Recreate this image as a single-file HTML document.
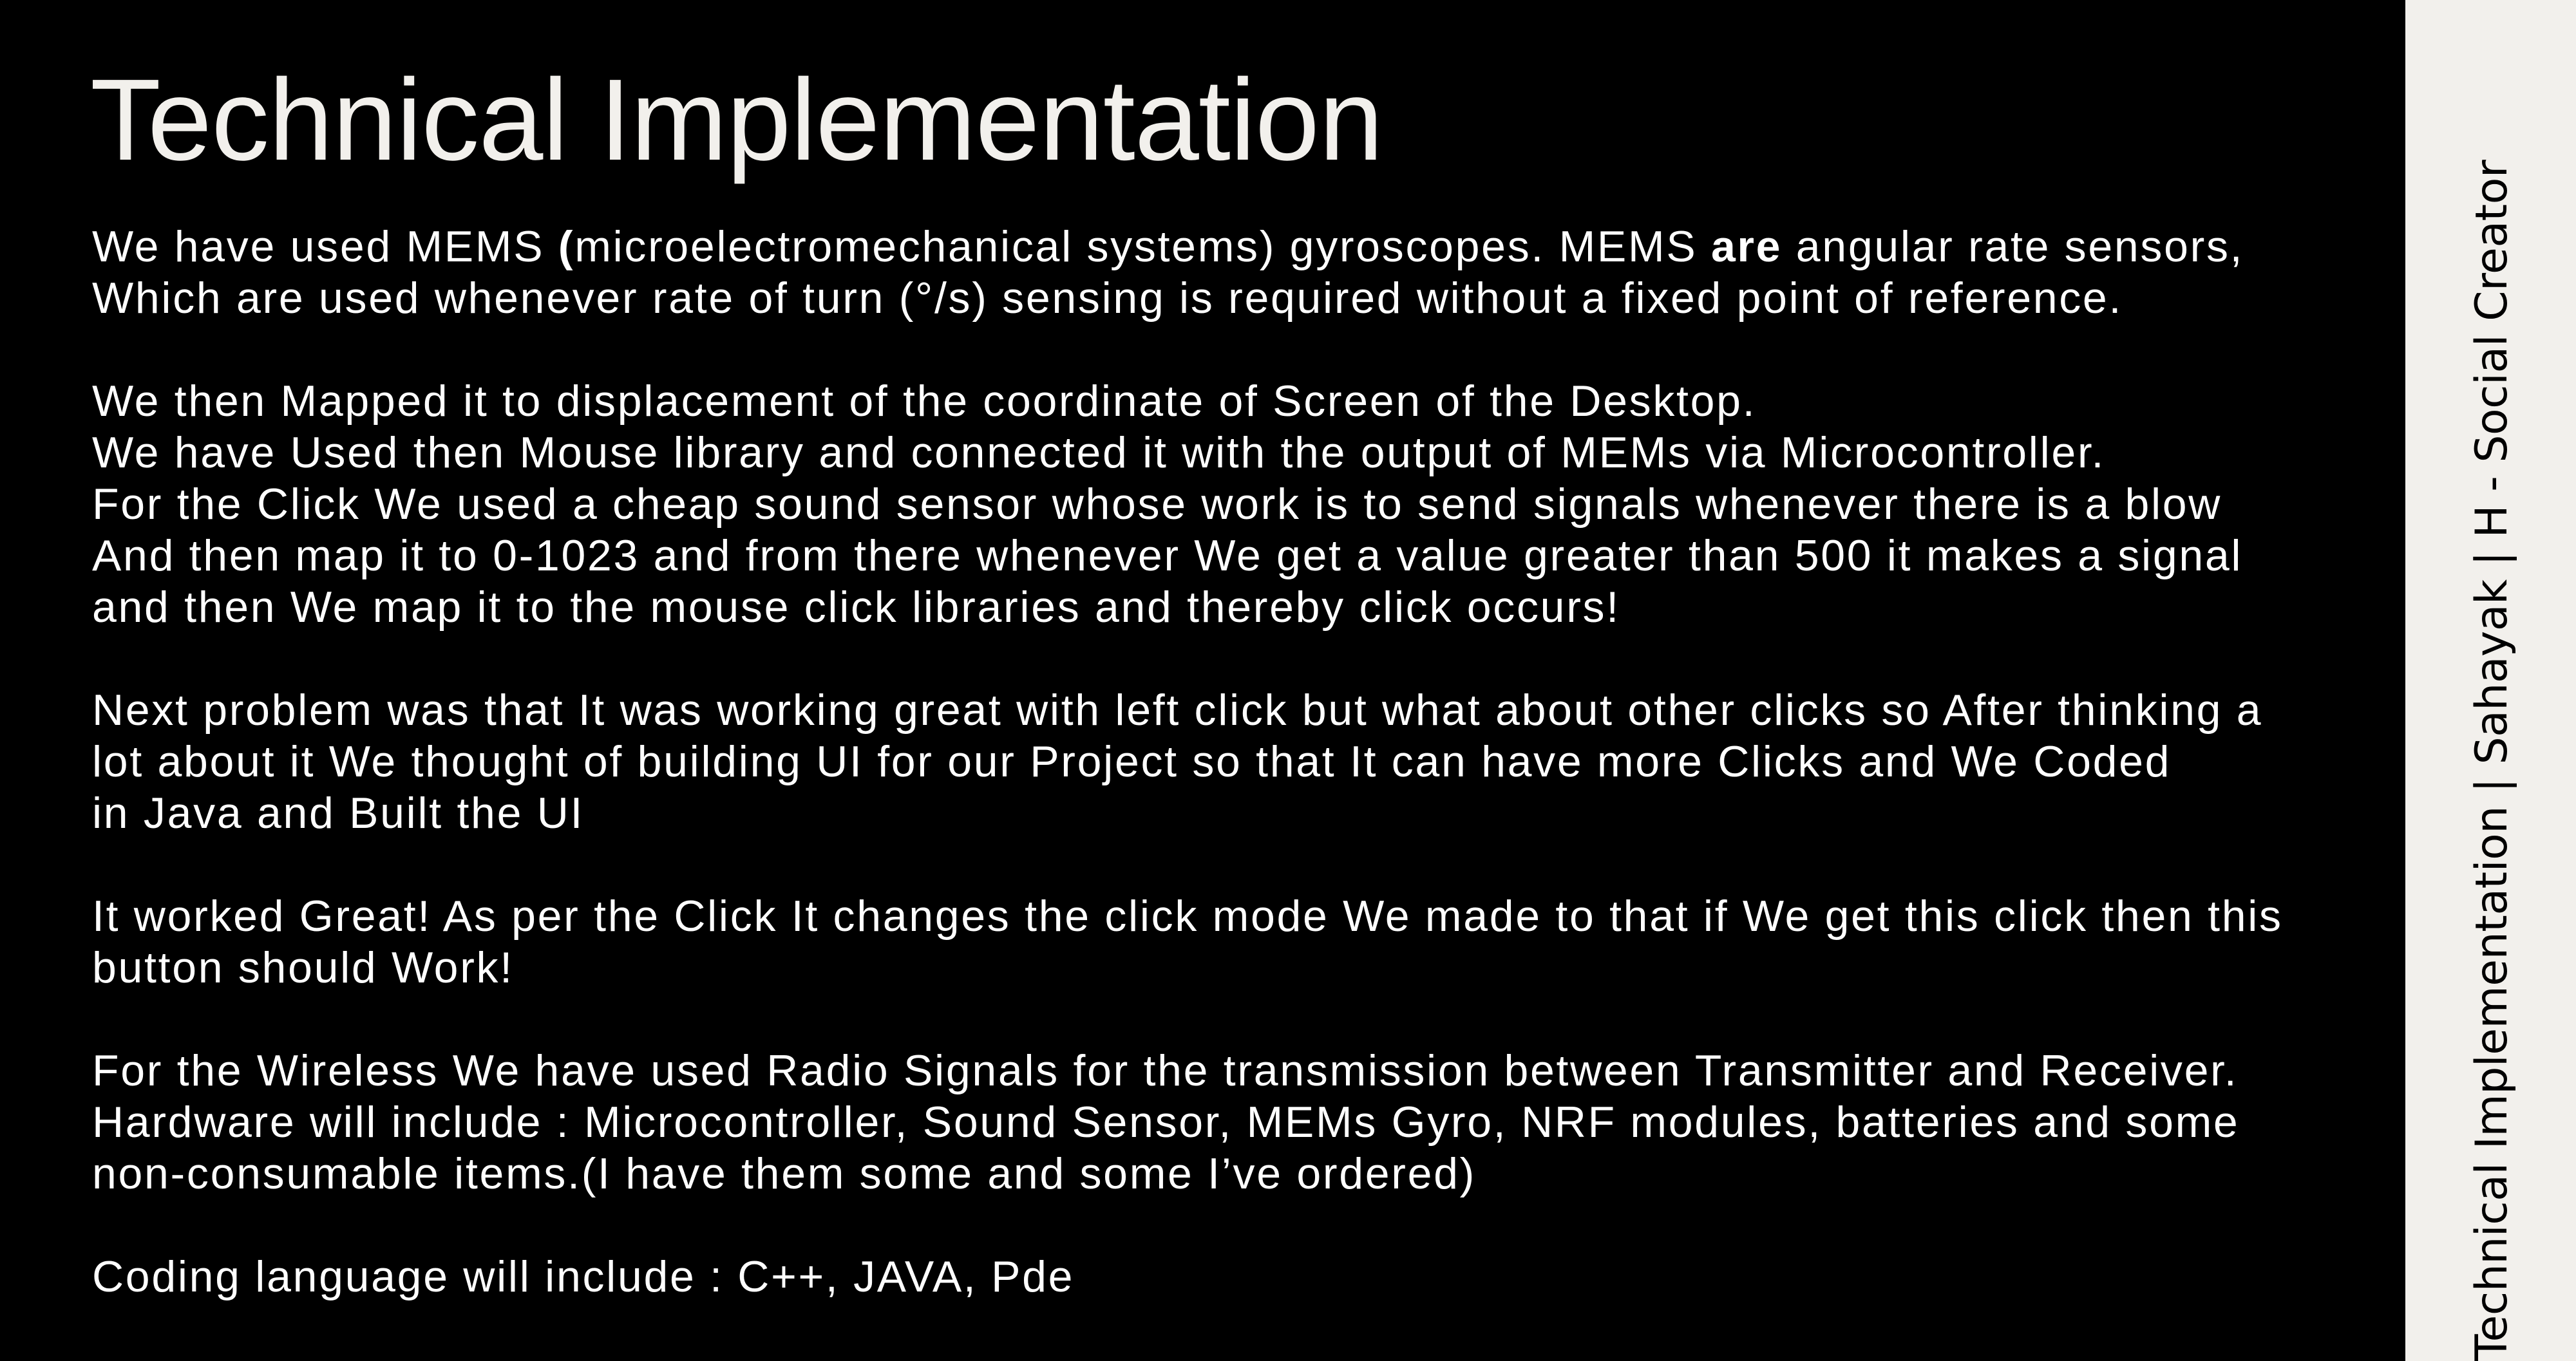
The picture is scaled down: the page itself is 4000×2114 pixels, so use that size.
<!DOCTYPE html>
<html><head><meta charset="utf-8"><style>
html,body{margin:0;padding:0}
body{width:4000px;height:2114px;background:#000;position:relative;overflow:hidden;font-family:"Liberation Sans",sans-serif}
.title{position:absolute;left:140px;top:92px;font-size:180px;line-height:190px;color:#f2f0ec;white-space:nowrap;letter-spacing:-1px}
.body{position:absolute;left:143px;top:343px;font-size:68px;line-height:80px;color:#fff;white-space:nowrap;letter-spacing:2.7px}
.body div{height:80px}
.panel{position:absolute;left:3735px;top:0;width:265px;height:2114px;background:#f2f0ec}
.side{position:absolute;left:3825px;top:255px;height:1859px;width:90px;line-height:90px;writing-mode:vertical-rl;transform:rotate(180deg);font-size:68px;color:#000;white-space:nowrap;text-align:left;font-family:"DejaVu Sans","Liberation Sans",sans-serif;letter-spacing:-0.5px}
</style></head><body>
<div class="title">Technical Implementation</div>
<div class="body">
<div>We have used MEMS <b>(</b>microelectromechanical systems) gyroscopes. MEMS <b>are</b> angular rate sensors,</div>
<div>Which are used whenever rate of turn (°/s) sensing is required without a fixed point of reference.</div>
<div></div>
<div>We then Mapped it to displacement of the coordinate of Screen of the Desktop.</div>
<div>We have Used then Mouse library and connected it with the output of MEMs via Microcontroller.</div>
<div>For the Click We used a cheap sound sensor whose work is to send signals whenever there is a blow</div>
<div>And then map it to 0-1023 and from there whenever We get a value greater than 500 it makes a signal</div>
<div>and then We map it to the mouse click libraries and thereby click occurs!</div>
<div></div>
<div>Next problem was that It was working great with left click but what about other clicks so After thinking a</div>
<div>lot about it We thought of building UI for our Project so that It can have more Clicks and We Coded</div>
<div>in Java and Built the UI</div>
<div></div>
<div>It worked Great! As per the Click It changes the click mode We made to that if We get this click then this</div>
<div>button should Work!</div>
<div></div>
<div>For the Wireless We have used Radio Signals for the transmission between Transmitter and Receiver.</div>
<div>Hardware will include : Microcontroller, Sound Sensor, MEMs Gyro, NRF modules, batteries and some</div>
<div>non-consumable items.(I have them some and some I’ve ordered)</div>
<div></div>
<div>Coding language will include : C++, JAVA, Pde</div>
</div>
<div class="panel"></div>
<div class="side">Technical Implementation | Sahayak | H - Social Creator</div>
</body></html>
